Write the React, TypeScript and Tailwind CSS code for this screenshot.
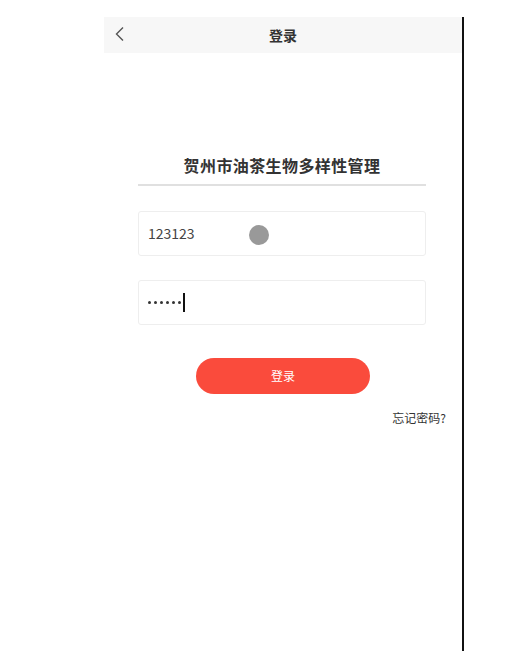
import React from 'react'

const font = { fontFamily: '"Noto Sans CJK SC", "Noto Sans", sans-serif' }

const App = () => {
  return (
    <div className="min-h-[656px] w-full bg-white" style={font}>
      <div className="pl-[104px] pt-[17px]">
        <div className="relative w-[360px] h-[634px] border-r-2 border-[#111]">
          {/* header */}
          <div className="relative h-[36px] bg-[#f7f7f7] flex items-center justify-center">
            <svg className="absolute left-[10px] top-[9px]" width="12" height="16" viewBox="0 0 12 16" fill="none">
              <path d="M9 1.5 L2.5 8 L9 14.5" stroke="#555" strokeWidth="1.4" />
            </svg>
            <span className="text-[14px] font-bold text-[#333]">登录</span>
          </div>

          {/* title */}
          <div className="mt-[100px] ml-[34px] w-[288px] flex flex-col items-center">
            <h1 className="text-[16px] leading-[24px] font-bold text-[#333] tracking-[0.4px]">贺州市油茶生物多样性管理</h1>
            <div className="mt-[7px] w-full h-[2px] bg-[#e0e0e0]" />
          </div>

          {/* inputs */}
          <div className="mx-[34px] mt-[25px] flex flex-col gap-[24px]">
            <div className="relative h-[45px] w-[288px] rounded-[3px] border border-[#eeeeee] flex items-center pl-[9px]">
              <span className="text-[14px] text-[#444]">123123</span>
              <div className="absolute left-[110px] top-[13px] w-[20px] h-[20px] rounded-full bg-[#999999]" />
            </div>
            <div className="h-[45px] w-[288px] rounded-[3px] border border-[#eeeeee] flex items-center pl-[9px]">
              <div className="flex gap-[3px]">
                {[0, 1, 2, 3, 4, 5].map((i) => (
                  <span key={i} className="w-[3px] h-[3px] rounded-full bg-[#333]" />
                ))}
              </div>
              <span className="ml-[2px] w-[1.5px] h-[19px] bg-[#111]" />
            </div>
          </div>

          {/* button */}
          <div className="mt-[33px] flex justify-center">
            <button className="w-[174px] h-[36px] rounded-full bg-[#fa4b3c] text-white text-[12px]">登录</button>
          </div>

          <div className="mt-[15px] pr-[16px] flex justify-end">
            <span className="text-[12px] text-[#333]">忘记密码?</span>
          </div>
        </div>
      </div>
    </div>
  )
}

export default App
